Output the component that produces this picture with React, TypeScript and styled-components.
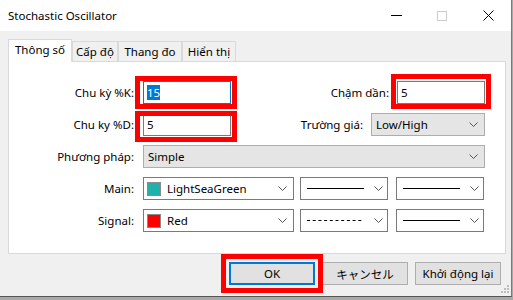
import * as React from "react";
import styled, { createGlobalStyle } from "styled-components";

const GlobalStyle = createGlobalStyle`
	body {
		margin: 0;
		background: #a9a9a9;
		font-family: "Noto Sans", "Noto Sans CJK JP", sans-serif;
	}
`;

const Window = styled.div`
	position: relative;
	width: 511px;
	height: 296px;
	background: #f0f0f0;
	border-right: 1px solid #7a7a7a;
	border-bottom: 1px solid #555;
	font-size: 11.5px;
	color: #000;
	display: flex;
	flex-direction: column;
`;

const TitleBar = styled.div`
	height: 31px;
	flex: none;
	background: #fff;
	display: flex;
	align-items: center;
	padding-left: 8px;
`;

const Title = styled.div`
	flex: 1;
	font-size: 11.5px;
`;

const CaptionButton = styled.div`
	width: 46px;
	height: 31px;
	display: flex;
	align-items: center;
	justify-content: center;
`;

const Body = styled.div`
	padding: 8px 5px 0 8px;
	display: flex;
	flex-direction: column;
`;

const Tabs = styled.div`
	height: 22px;
	display: flex;
	align-items: flex-end;
`;

const Tab = styled.div<{ $w: number; $active?: boolean }>`
	width: ${(p) => p.$w}px;
	height: ${(p) => (p.$active ? 23 : 20)}px;
	box-sizing: border-box;
	border: 1px solid #d9d9d9;
	border-bottom: none;
	background: ${(p) => (p.$active ? "#fff" : "#f0f0f0")};
	display: flex;
	align-items: center;
	justify-content: center;
	padding-bottom: ${(p) => (p.$active ? 3 : 1)}px;
	margin-bottom: ${(p) => (p.$active ? -1 : 0)}px;
	position: relative;
	z-index: ${(p) => (p.$active ? 1 : 0)};
	white-space: nowrap;
`;

const Panel = styled.div`
	width: 498px;
	height: 193px;
	box-sizing: border-box;
	border: 1px solid #d9d9d9;
	background: #fff;
	padding: 19px 20px 0 0;
	display: flex;
	flex-direction: column;
	gap: 9px;
`;

const Row = styled.div`
	height: 23px;
	display: flex;
	align-items: center;
`;

const Label = styled.div<{ $left?: boolean }>`
	width: ${(p) => (p.$left ? "125px" : "auto")};
	margin-left: ${(p) => (p.$left ? "0" : "auto")};
	margin-right: ${(p) => (p.$left ? 9 : 8)}px;
	text-align: right;
	white-space: nowrap;
`;

const Marked = styled.div<{ $inset?: string }>`
	position: relative;
	display: flex;

	&::after {
		content: "";
		display: ${(p) => (p.$inset ? "block" : "none")};
		position: absolute;
		inset: ${(p) => p.$inset || "0"};
		border: 5px solid #ff0000;
		pointer-events: none;
	}
`;

const TextBox = styled.div<{ $focused?: boolean }>`
	width: 88px;
	height: 23px;
	box-sizing: border-box;
	border: 1px solid ${(p) => (p.$focused ? "#0078d7" : "#7a7a7a")};
	background: #fff;
	padding: 0 3px;
	display: flex;
	align-items: center;
`;

const Selection = styled.span`
	background: #0078d7;
	color: #fff;
`;

const Combo = styled.div<{ $w?: number; $gray?: boolean; $ml?: number }>`
	width: ${(p) => (p.$w ? `${p.$w}px` : "auto")};
	flex: ${(p) => (p.$w ? "none" : "1")};
	margin-left: ${(p) => p.$ml || 0}px;
	height: 23px;
	box-sizing: border-box;
	border: 1px solid ${(p) => (p.$gray ? "#adadad" : "#7a7a7a")};
	background: ${(p) => (p.$gray ? "#e5e5e5" : "#fff")};
	padding: 0 6px 0 4px;
	display: flex;
	align-items: center;
	gap: 6px;
`;

const ComboText = styled.div`
	flex: 1;
	white-space: nowrap;
	overflow: hidden;
`;

const Swatch = styled.div<{ $color: string }>`
	width: 14px;
	height: 14px;
	box-sizing: border-box;
	border: 1px solid #8a8a8a;
	background: ${(p) => p.$color};
	flex: none;
	margin-left: -1px;
`;

const LineSample = styled.div`
	flex: 1;
	display: flex;
	align-items: center;
	padding-left: 2px;
	padding-right: 4px;
`;

const ButtonRow = styled.div`
	margin-top: 8px;
	padding-right: 5px;
	display: flex;
	justify-content: flex-end;
	gap: 7px;
`;

const Button = styled.div<{ $default?: boolean }>`
	width: 86px;
	height: 23px;
	box-sizing: border-box;
	background: #e1e1e1;
	border: 1px solid ${(p) => (p.$default ? "#0078d7" : "#adadad")};
	box-shadow: ${(p) => (p.$default ? "inset 0 0 0 1px #0078d7" : "none")};
	display: flex;
	align-items: center;
	justify-content: center;
	white-space: nowrap;
`;

const Grip = styled.svg`
	position: absolute;
	right: 2px;
	bottom: 1px;
`;

const Chevron = () => (
	<svg width="9" height="5" viewBox="0 0 9 5" style={{ flex: "none" }}>
		<polyline points="0.5,0.5 4.5,4.5 8.5,0.5" fill="none" stroke="#555" strokeWidth="1" />
	</svg>
);

const Line = ({ dashed }: { dashed?: boolean }) => (
	<svg width="57" height="3" viewBox="0 0 57 3">
		<line
			x1="0"
			y1="1.5"
			x2="57"
			y2="1.5"
			stroke="#000"
			strokeWidth="1"
			strokeDasharray={dashed ? "3 2.7" : undefined}
		/>
	</svg>
);

export default function App() {
	return (
		<>
			<GlobalStyle />
			<Window>
				<TitleBar>
					<Title>Stochastic Oscillator</Title>
					<CaptionButton>
						<svg width="11" height="1">
							<rect width="11" height="1" fill="#000" />
						</svg>
					</CaptionButton>
					<CaptionButton>
						<svg width="10" height="10">
							<rect x="0.5" y="0.5" width="9" height="9" fill="none" stroke="#cccccc" />
						</svg>
					</CaptionButton>
					<CaptionButton>
						<svg width="11" height="11">
							<path d="M0.5 0.5 L10.5 10.5 M10.5 0.5 L0.5 10.5" stroke="#000" strokeWidth="1" />
						</svg>
					</CaptionButton>
				</TitleBar>
				<Body>
					<Tabs>
						<Tab $w={64} $active>
							Thông số
						</Tab>
						<Tab $w={46}>Cấp độ</Tab>
						<Tab $w={64}>Thang đo</Tab>
						<Tab $w={54}>Hiển thị</Tab>
					</Tabs>
					<Panel>
						<Row>
							<Label $left>Chu kỳ %K:</Label>
							<Marked $inset="-5px -6px -5px -8px">
								<TextBox $focused>
									<Selection>15</Selection>
								</TextBox>
							</Marked>
							<Label>Chậm dần:</Label>
							<Marked $inset="-7px -6px -5px -6px">
								<TextBox>5</TextBox>
							</Marked>
						</Row>
						<Row>
							<Label $left>Chu ky %D:</Label>
							<Marked $inset="-2px -6px -6px -8px">
								<TextBox>5</TextBox>
							</Marked>
							<Label>Trường giá:</Label>
							<Combo $w={114} $gray>
								<ComboText>Low/High</ComboText>
								<Chevron />
							</Combo>
						</Row>
						<Row>
							<Label $left>Phương pháp:</Label>
							<Combo $gray>
								<ComboText>Simple</ComboText>
								<Chevron />
							</Combo>
						</Row>
						<Row>
							<Label $left>Main:</Label>
							<Combo $w={151}>
								<Swatch $color="#20b2aa" />
								<ComboText>LightSeaGreen</ComboText>
								<Chevron />
							</Combo>
							<Combo $w={88} $ml={6}>
								<LineSample>
									<Line />
								</LineSample>
								<Chevron />
							</Combo>
							<Combo $w={88} $ml={8}>
								<LineSample>
									<Line />
								</LineSample>
								<Chevron />
							</Combo>
						</Row>
						<Row>
							<Label $left>Signal:</Label>
							<Combo $w={151}>
								<Swatch $color="#ff0000" />
								<ComboText>Red</ComboText>
								<Chevron />
							</Combo>
							<Combo $w={88} $ml={6}>
								<LineSample>
									<Line dashed />
								</LineSample>
								<Chevron />
							</Combo>
							<Combo $w={88} $ml={8}>
								<LineSample>
									<Line />
								</LineSample>
								<Chevron />
							</Combo>
						</Row>
					</Panel>
					<ButtonRow>
						<Marked $inset="-8px -8px -8px -8px">
							<Button $default>OK</Button>
						</Marked>
						<Button>キャンセル</Button>
						<Button>Khởi động lại</Button>
					</ButtonRow>
				</Body>
				<Grip width="10" height="10" viewBox="0 0 10 10">
					<g fill="#bdbdbd">
						<rect x="8" y="0" width="2" height="2" />
						<rect x="5" y="3" width="2" height="2" />
						<rect x="8" y="3" width="2" height="2" />
						<rect x="2" y="6" width="2" height="2" />
						<rect x="5" y="6" width="2" height="2" />
						<rect x="8" y="6" width="2" height="2" />
					</g>
				</Grip>
			</Window>
		</>
	);
}
